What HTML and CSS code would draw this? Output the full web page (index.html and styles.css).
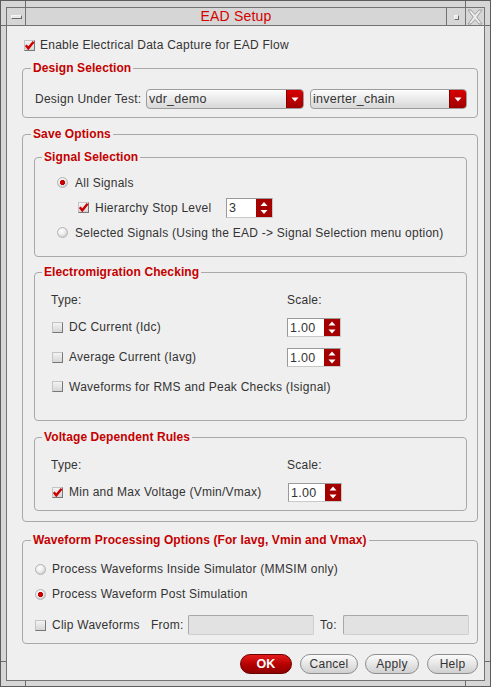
FILE: index.html
```html
<!DOCTYPE html>
<html>
<head>
<meta charset="utf-8">
<title>EAD Setup</title>
<link rel="stylesheet" href="styles.css">
</head>
<body>
<div class="window">
  <div class="inner">
    <div class="titlebar">
      <div class="tb-btn tb-menu"><span class="menu-bar"></span></div>
      <div class="tb-title">EAD Setup</div>
      <div class="tb-btn tb-max"><span class="max-sq"></span></div>
      <div class="tb-btn tb-close">
        <svg width="16" height="16" viewBox="0 0 16 16"><polygon points="1,1 4,1 8,5.5 12,1 15,1 9.8,8 15,15 12,15 8,10.5 4,15 1,15 6.2,8" fill="#ececec" stroke="#a0a0a0" stroke-width="1"/></svg>
      </div>
    </div>

    <div class="content">
      <div class="row enable-row">
        <span class="cb"><svg width="11" height="11" viewBox="0 0 11 11"><path d="M1.8 5.2 L4.3 8.3 L9.6 1.8" fill="none" stroke="#cc0000" stroke-width="2.4"/></svg></span>
        <span class="lbl">Enable Electrical Data Capture for EAD Flow</span>
      </div>

      <fieldset class="group g-design">
        <legend>Design Selection</legend>
        <div class="dut-row">
          <span class="dut-label">Design Under Test:</span>
          <div class="combo c1"><span class="combo-text">vdr_demo</span><span class="combo-btn"><svg width="8" height="5" viewBox="0 0 8 5"><polygon points="0.5,0.5 7.5,0.5 4,4.5" fill="#fff"/></svg></span></div>
          <div class="combo c2"><span class="combo-text">inverter_chain</span><span class="combo-btn"><svg width="8" height="5" viewBox="0 0 8 5"><polygon points="0.5,0.5 7.5,0.5 4,4.5" fill="#fff"/></svg></span></div>
        </div>
      </fieldset>

      <fieldset class="group g-save">
        <legend>Save Options</legend>

        <fieldset class="group sub g-signal">
          <legend>Signal Selection</legend>
          <div class="row sig-row"><span class="radio on"></span><span class="lbl">All Signals</span></div>
          <div class="row sig-row hier-row">
            <span class="cb"><svg width="11" height="11" viewBox="0 0 11 11"><path d="M1.8 5.2 L4.3 8.3 L9.6 1.8" fill="none" stroke="#cc0000" stroke-width="2.4"/></svg></span>
            <span class="lbl hier-lbl">Hierarchy Stop Level</span>
            <div class="spin s-hier"><span class="spin-val">3</span><span class="spin-btn"><svg width="16" height="18" viewBox="0 0 16 18"><polygon points="4.5,7 8,3 11.5,7" fill="#fff"/><polygon points="4.5,11 8,15 11.5,11" fill="#fff"/></svg></span></div>
          </div>
          <div class="row sig-row"><span class="radio"></span><span class="lbl">Selected Signals (Using the EAD -&gt; Signal Selection menu option)</span></div>
        </fieldset>

        <fieldset class="group sub g-em">
          <legend>Electromigration Checking</legend>
          <div class="row type-row"><span class="col1">Type:</span><span>Scale:</span></div>
          <div class="row em-row">
            <span class="col1 chk-col"><span class="cb"></span><span class="lbl">DC Current (Idc)</span></span>
            <div class="spin s-scale"><span class="spin-val">1.00</span><span class="spin-btn"><svg width="16" height="17" viewBox="0 0 16 17"><polygon points="4.5,6.5 8,2.5 11.5,6.5" fill="#fff"/><polygon points="4.5,10.5 8,14.5 11.5,10.5" fill="#fff"/></svg></span></div>
          </div>
          <div class="row em-row">
            <span class="col1 chk-col"><span class="cb"></span><span class="lbl">Average Current (Iavg)</span></span>
            <div class="spin s-scale"><span class="spin-val">1.00</span><span class="spin-btn"><svg width="16" height="17" viewBox="0 0 16 17"><polygon points="4.5,6.5 8,2.5 11.5,6.5" fill="#fff"/><polygon points="4.5,10.5 8,14.5 11.5,10.5" fill="#fff"/></svg></span></div>
          </div>
          <div class="row em-row em-last">
            <span class="col1 chk-col wide"><span class="cb"></span><span class="lbl">Waveforms for RMS and Peak Checks (Isignal)</span></span>
          </div>
        </fieldset>

        <fieldset class="group sub g-vdr">
          <legend>Voltage Dependent Rules</legend>
          <div class="row type-row"><span class="col1">Type:</span><span>Scale:</span></div>
          <div class="row em-row">
            <span class="col1 chk-col"><span class="cb"><svg width="11" height="11" viewBox="0 0 11 11"><path d="M1.8 5.2 L4.3 8.3 L9.6 1.8" fill="none" stroke="#cc0000" stroke-width="2.4"/></svg></span><span class="lbl">Min and Max Voltage (Vmin/Vmax)</span></span>
            <div class="spin s-scale s-vdr"><span class="spin-val">1.00</span><span class="spin-btn"><svg width="16" height="17" viewBox="0 0 16 17"><polygon points="4.5,6.5 8,2.5 11.5,6.5" fill="#fff"/><polygon points="4.5,10.5 8,14.5 11.5,10.5" fill="#fff"/></svg></span></div>
          </div>
        </fieldset>
      </fieldset>

      <fieldset class="group g-wave">
        <legend>Waveform Processing Options (For Iavg, Vmin and Vmax)</legend>
        <div class="row w-row w1"><span class="radio"></span><span class="lbl">Process Waveforms Inside Simulator (MMSIM only)</span></div>
        <div class="row w-row w2"><span class="radio on"></span><span class="lbl">Process Waveform Post Simulation</span></div>
        <div class="row w-row clip-row">
          <span class="clip-block"><span class="cb"></span><span class="lbl">Clip Waveforms</span></span>
          <span class="from-lbl">From:</span>
          <span class="dis-input"></span>
          <span class="to-lbl">To:</span>
          <span class="dis-input"></span>
        </div>
      </fieldset>

      <div class="btn-row">
        <button class="btn ok">OK</button>
        <button class="btn cancel">Cancel</button>
        <button class="btn apply">Apply</button>
        <button class="btn help">Help</button>
      </div>
    </div>
  </div>
</div>
</body>
</html>
```

FILE: styles.css
```css
* { box-sizing: border-box; }

body {
  margin: 0;
  font-family: "Liberation Sans", Arial, sans-serif;
  font-size: 12px;
  letter-spacing: 0.25px;
  color: #333;
  background: #d6d6d6;
}

.window {
  width: 491px;
  height: 687px;
  border: 1px solid #5c5c5c;
  padding: 6px 5px 5px 5px;
  background-color: #d6d6d6;
  background-repeat: no-repeat;
  background-image:
    linear-gradient(#6c6c6c, #6c6c6c),
    linear-gradient(#6c6c6c, #6c6c6c),
    linear-gradient(#6c6c6c, #6c6c6c),
    linear-gradient(#6c6c6c, #6c6c6c),
    linear-gradient(#6c6c6c, #6c6c6c),
    linear-gradient(#6c6c6c, #6c6c6c),
    linear-gradient(#6c6c6c, #6c6c6c),
    linear-gradient(#6c6c6c, #6c6c6c);
  background-position:
    24px 0, 464px 0, 24px 680px, 464px 680px,
    0 24px, 484px 24px, 0 660px, 484px 660px;
  background-size:
    1px 6px, 1px 6px, 1px 5px, 1px 5px,
    5px 1px, 5px 1px, 5px 1px, 5px 1px;
}

.inner {
  height: 100%;
  border: 1px solid #737373;
  background: #efefef;
  display: flex;
  flex-direction: column;
}

/* title bar */
.titlebar {
  height: 18px;
  flex: none;
  display: flex;
  border-bottom: 1px solid #737373;
  background: #d6d6d6;
}
.tb-btn {
  width: 19px;
  flex: none;
  display: flex;
  align-items: center;
  justify-content: center;
}
.tb-menu { border-right: 1px solid #737373; }
.tb-max { border-left: 1px solid #737373; }
.tb-close { border-left: 1px solid #737373; }
.menu-bar {
  width: 11px;
  height: 4px;
  background: #e8e8e8;
  border: 1px solid;
  border-color: #f6f6f6 #6a6a6a #6a6a6a #f6f6f6;
  margin-top: 1px;
}
.max-sq {
  width: 5px;
  height: 5px;
  background: #eaeaea;
  border: 1px solid;
  border-color: #f4f4f4 #6a6a6a #6a6a6a #f4f4f4;
  margin-top: 1px;
}
.tb-close svg { display: block; }
.tb-title {
  flex: 1;
  text-align: center;
  color: #d40000;
  font-size: 14px;
  letter-spacing: 0.2px;
  line-height: 17px;
}

/* content */
.content {
  flex: 1;
  padding: 9px 6px 0 15px;
}

.row {
  display: flex;
  align-items: center;
}

.lbl { white-space: nowrap; }

.enable-row {
  height: 20px;
  padding-left: 2px;
}
.enable-row .lbl { margin-left: 5px; }

/* checkbox */
.cb {
  width: 11px;
  height: 11px;
  flex: none;
  border: 1px solid;
  border-color: #c4c4c4 #777 #777 #c4c4c4;
  background: linear-gradient(#f3f3f3, #d6d6d6);
  position: relative;
}
.cb svg {
  position: absolute;
  left: -1px;
  top: -1px;
}

/* radio */
.radio {
  width: 11px;
  height: 11px;
  flex: none;
  border-radius: 50%;
  border: 1px solid #b4b4b4;
  background: radial-gradient(circle at 40% 35%, #ffffff 0, #ececec 45%, #b8b8b8 100%);
}
.radio.on {
  background:
    radial-gradient(circle at 50% 50%, #d40000 0, #c00000 2.3px, transparent 2.9px),
    radial-gradient(circle at 40% 35%, #ffffff 0, #ececec 45%, #b8b8b8 100%);
}

/* group boxes */
.group {
  margin: 0;
  min-width: 0;
  border: 1px solid #a9a9a9;
  border-radius: 4px;
  padding: 0 10px 0 8px;
}
.group legend {
  padding: 0 2px;
  font-weight: bold;
  font-size: 12px;
  letter-spacing: 0.1px;
  line-height: 14px;
  color: #c40000;
}
.sub { padding-left: 7px; margin-left: 3px; }

.g-design {
  margin-top: 6px;
  padding-top: 14px;
  padding-bottom: 8px;
}
.dut-row {
  display: flex;
  align-items: center;
  height: 20px;
  padding-left: 4px;
}
.dut-label { width: 111px; flex: none; white-space: nowrap; }

.combo {
  height: 20px;
  display: flex;
  border: 1px solid #9c9c9c;
  border-radius: 4px;
  background: linear-gradient(#fdfdfd, #e6e6e6 60%, #d8d8d8);
  overflow: hidden;
  flex: none;
}
.c1 { width: 158px; }
.c2 { width: 157px; margin-left: 6px; }
.combo-text {
  flex: 1;
  padding-left: 2px;
  line-height: 18px;
  font-size: 12.5px;
}
.combo-btn {
  width: 17px;
  flex: none;
  display: flex;
  align-items: center;
  justify-content: center;
  background: linear-gradient(#d80000, #a00000);
  border-left: 1px solid #800000;
}
.combo-btn svg { display: block; }

.g-save {
  margin-top: 9px;
  padding-bottom: 10px;
}

.g-signal {
  margin-top: 9px;
  padding-top: 6px;
  padding-bottom: 11px;
}
.sig-row {
  height: 25px;
  padding-left: 15px;
}
.sig-row .lbl { margin-left: 7px; }
.hier-row { padding-left: 36px; }
.hier-row .lbl { margin-left: 6px; }
.hier-lbl { width: 131px; flex: none; }

/* spin boxes */
.spin {
  display: flex;
  height: 20px;
  border: 1px solid;
  border-color: #9a9a9a #c8c8c8 #c8c8c8 #9a9a9a;
  background: #fff;
  flex: none;
}
.spin-val {
  flex: 1;
  padding-left: 2px;
  line-height: 18px;
  font-size: 12.5px;
}
.spin-btn {
  width: 16px;
  flex: none;
  background: #a40000;
  display: flex;
  align-items: center;
  justify-content: center;
}
.spin-btn svg { display: block; }
.s-hier { width: 47px; }
.s-scale { width: 54px; height: 19px; }
.s-vdr { margin-left: 1px; }

.g-em {
  margin-top: 8px;
  padding-top: 9px;
  padding-bottom: 19px;
}
.type-row {
  height: 24px;
  padding-left: 9px;
}
.col1 { width: 236px; flex: none; white-space: nowrap; }
.em-row {
  height: 30px;
  padding-left: 9px;
}
.em-last { height: 29px; }
.chk-col {
  display: flex;
  align-items: center;
  padding-left: 1px;
}
.chk-col .lbl { margin-left: 6px; }
.chk-col.wide { width: auto; }

.g-vdr {
  margin-top: 9px;
  padding-top: 9px;
  padding-bottom: 3px;
}

.g-wave {
  margin-top: 11px;
  padding-top: 10px;
  padding-bottom: 7px;
}
.w-row { padding-left: 4px; }
.w-row .lbl { margin-left: 6px; }
.w1 { height: 24px; }
.w2 { height: 26px; }
.clip-row {
  height: 22px;
  margin-top: 7px;
}
.clip-block {
  width: 116px;
  flex: none;
  display: flex;
  align-items: center;
}
.from-lbl { width: 37px; flex: none; }
.to-lbl { width: 23px; flex: none; margin-left: 6px; }
.dis-input {
  width: 126px;
  height: 20px;
  flex: none;
  background: #e2e2e2;
  border: 1px solid;
  border-color: #a8a8a8 #cfcfcf #cfcfcf #a8a8a8;
  border-radius: 2px;
}

/* buttons */
.btn-row {
  margin-top: 10px;
  height: 20px;
  display: flex;
  justify-content: flex-end;
}
.btn {
  height: 20px;
  margin: 0;
  padding: 0;
  font-family: "Liberation Sans", Arial, sans-serif;
  font-size: 12px;
  letter-spacing: 0.25px;
  color: #333;
  border: 1px solid #8e8e8e;
  border-radius: 10px;
  background: linear-gradient(#fbfbfb, #e4e4e4 55%, #cfcfcf);
}
.ok {
  width: 52px;
  color: #fff;
  font-weight: bold;
  font-size: 12.5px;
  border-color: #6a0000;
  background: linear-gradient(#e41a1a, #b40000 55%, #8e0000);
}
.cancel { width: 58px; margin-left: 8px; }
.apply { width: 54px; margin-left: 7px; }
.help { width: 51px; margin-left: 8px; }
```
